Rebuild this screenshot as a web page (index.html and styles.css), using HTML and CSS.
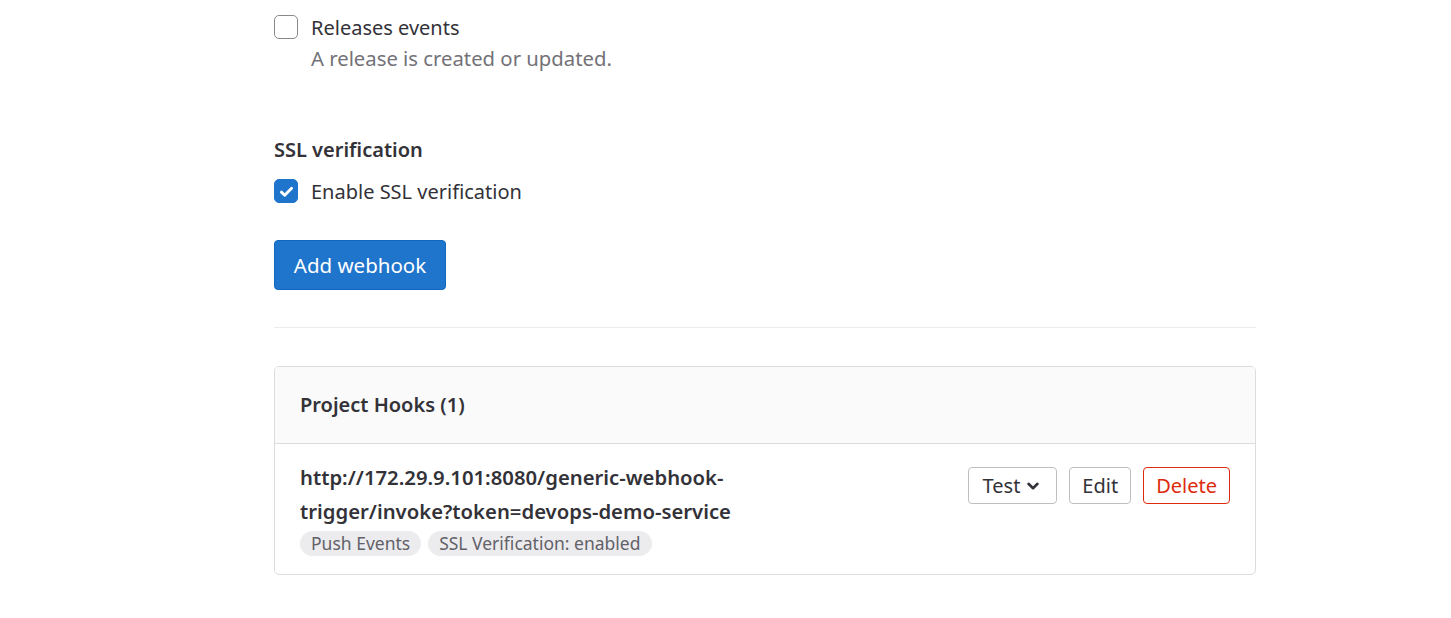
FILE: index.html
```html
<!DOCTYPE html>
<html>
<head>
<meta charset="utf-8">
<link rel="stylesheet" href="styles.css">
</head>
<body>
<div class="page">
  <div class="check-row">
    <span class="box"></span>
    <div class="check-text">
      <div class="label">Releases events</div>
      <div class="help">A release is created or updated.</div>
    </div>
  </div>

  <div class="section-title">SSL verification</div>
  <div class="check-row ssl">
    <span class="box checked">
      <svg viewBox="0 0 16 16" width="17" height="17"><path d="M3.2 8.6l3.1 2.9 6.5-6.6" fill="none" stroke="#fff" stroke-width="2.7" stroke-linecap="round" stroke-linejoin="round"/></svg>
    </span>
    <div class="check-text"><div class="label">Enable SSL verification</div></div>
  </div>

  <button class="btn-primary">Add webhook</button>

  <div class="divider"></div>

  <div class="card">
    <div class="card-header">Project Hooks (1)</div>
    <div class="card-body">
      <div class="hook-info">
        <div class="hook-url">http://172.29.9.101:8080/generic-webhook-trigger/invoke?token=devops-demo-service</div>
        <div class="badges">
          <span class="badge">Push Events</span>
          <span class="badge">SSL Verification: enabled</span>
        </div>
      </div>
      <div class="actions">
        <button class="btn btn-test">Test <svg class="chev" viewBox="0 0 16 16" width="16" height="16"><path d="M3.5 5.8l4.5 4.4 4.5-4.4" fill="none" stroke="#333238" stroke-width="2.6" stroke-linecap="round" stroke-linejoin="round"/></svg></button>
        <button class="btn">Edit</button>
        <button class="btn btn-danger">Delete</button>
      </div>
    </div>
  </div>
</div>
</body>
</html>
```
FILE: styles.css
```css
* { box-sizing: border-box; }
html, body { margin: 0; padding: 0; background: #fff; }
body {
  font-family: "Noto Sans", "Open Sans", sans-serif;
  font-size: 20px;
  color: #333238;
}
.page {
  width: 982px;
  margin-left: 274px;
  padding-top: 13px;
}
.check-row {
  display: flex;
  align-items: flex-start;
  gap: 13px;
}
.box {
  flex: none;
  width: 24px;
  height: 24px;
  margin-top: 2px;
  border: 1px solid #89888d;
  border-radius: 5px;
  display: flex;
  align-items: center;
  justify-content: center;
  background: #fff;
}
.box.checked {
  background: #1f75cb;
  border-color: #1f75cb;
}
.label {
  line-height: 30px;
}
.help {
  line-height: 31px;
  color: #737278;
  font-size: 20.3px;
}
.section-title {
  margin-top: 61px;
  line-height: 30px;
  font-weight: 600;
}
.ssl { margin-top: 12px; }
.btn-primary {
  margin-top: 33px;
  display: block;
  width: 172px;
  height: 50px;
  border: 1px solid #1068bf;
  background: #1f75cb;
  color: #fff;
  border-radius: 4px;
  font-family: inherit;
  font-size: 20.5px;
  padding: 0;
}
.divider {
  margin-top: 37px;
  height: 1px;
  background: #ececef;
}
.card {
  margin-top: 38px;
  border: 1px solid #dcdcde;
  border-radius: 5px;
  overflow: hidden;
}
.card-header {
  background: #fafafa;
  border-bottom: 1px solid #dcdcde;
  height: 77px;
  padding: 0 25px;
  display: flex;
  align-items: center;
  font-weight: 600;
  line-height: 30px;
}
.card-body {
  display: flex;
  justify-content: space-between;
  align-items: flex-start;
  padding: 16px 25px 18px 25px;
}
.hook-info { width: 470px; }
.hook-url {
  font-weight: 600;
  line-height: 34px;
  font-size: 20.3px;
}
.badges {
  display: flex;
  gap: 7px;
  margin-top: 3px;
}
.badge {
  background: #ececef;
  color: #626168;
  border-radius: 13px;
  height: 25px;
  line-height: 25px;
  padding: 0 11px;
  font-size: 17.5px;
}
.actions {
  display: flex;
  gap: 12px;
  margin-top: 7px;
}
.btn {
  height: 37px;
  border: 1px solid #bfbfc3;
  background: #fff;
  border-radius: 4px;
  font-family: inherit;
  font-size: 20px;
  color: #333238;
  padding: 0 12px;
  display: flex;
  align-items: center;
  gap: 5px;
}
.btn-test {
  padding: 0 15px 0 14px;
  gap: 5px;
}
.btn-danger {
  border-color: #dd2b0e;
  color: #dd2b0e;
}
.chev { margin-top: 1px; }
```
